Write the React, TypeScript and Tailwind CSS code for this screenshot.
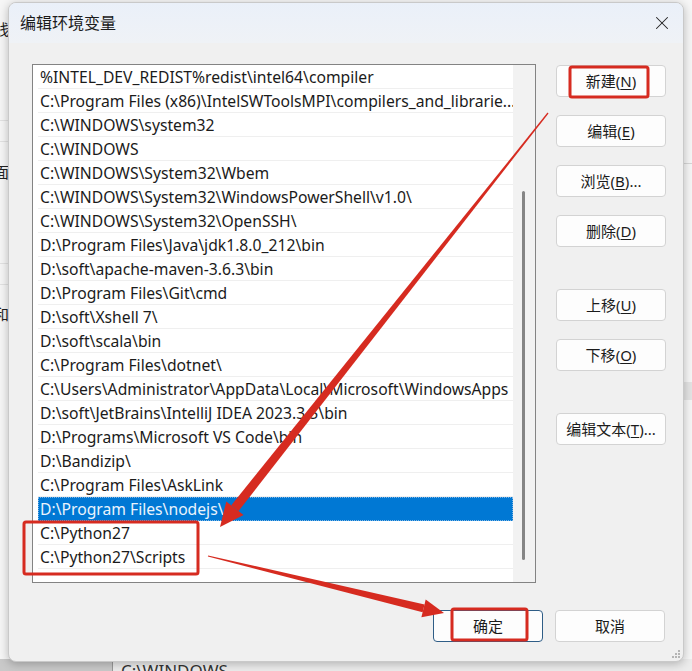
import { X } from "lucide-react";

const paths = [
  "%INTEL_DEV_REDIST%redist\\intel64\\compiler",
  "C:\\Program Files (x86)\\IntelSWToolsMPI\\compilers_and_librarie...",
  "C:\\WINDOWS\\system32",
  "C:\\WINDOWS",
  "C:\\WINDOWS\\System32\\Wbem",
  "C:\\WINDOWS\\System32\\WindowsPowerShell\\v1.0\\",
  "C:\\WINDOWS\\System32\\OpenSSH\\",
  "D:\\Program Files\\Java\\jdk1.8.0_212\\bin",
  "D:\\soft\\apache-maven-3.6.3\\bin",
  "D:\\Program Files\\Git\\cmd",
  "D:\\soft\\Xshell 7\\",
  "D:\\soft\\scala\\bin",
  "C:\\Program Files\\dotnet\\",
  "C:\\Users\\Administrator\\AppData\\Local\\Microsoft\\WindowsApps",
  "D:\\soft\\JetBrains\\IntelliJ IDEA 2023.3.5\\bin",
  "D:\\Programs\\Microsoft VS Code\\bin",
  "D:\\Bandizip\\",
  "C:\\Program Files\\AskLink",
  "D:\\Program Files\\nodejs\\",
  "C:\\Python27",
  "C:\\Python27\\Scripts",
  "",
];

const selected = 18;

function WinButton({ label, hot, tail, primary }: { label: string; hot?: string; tail?: string; primary?: boolean }) {
  return (
    <button
      className={`flex h-[32px] w-[110px] items-center justify-center rounded-[4px] border bg-[#fdfdfd] text-[15px] text-[#1b1b1b] ${
        primary ? "border-[#2f5d86]" : "border-[#d3d3d3]"
      }`}
    >
      {label}
      {hot && (
        <>
          (<span className="underline underline-offset-2">{hot}</span>)
        </>
      )}
      {tail}
    </button>
  );
}

export default function App() {
  return (
    <div
      className="relative h-[671px] w-[692px] overflow-hidden bg-[#f6f6f6]"
      style={{ fontFamily: '"Noto Sans", "Noto Sans CJK SC", sans-serif' }}
    >
      {/* window behind the dialog */}
      <div className="absolute inset-0">
        <div className="absolute left-0 top-[120px] h-px w-[10px] bg-[#e2e2e2]" />
        <div className="absolute left-0 top-[141px] h-px w-[10px] bg-[#e2e2e2]" />
        <div className="absolute left-0 top-[263px] h-px w-[10px] bg-[#e2e2e2]" />
        <div className="absolute left-0 top-[284px] h-px w-[10px] bg-[#e2e2e2]" />
        <span className="absolute left-[-6px] top-[18px] text-[15px] text-[#222]">线</span>
        <span className="absolute left-[-6px] top-[161px] text-[15px] text-[#222]">面</span>
        <span className="absolute left-[-6px] top-[303px] text-[15px] text-[#222]">和</span>
        <div className="absolute right-0 top-[163px] h-px w-[10px] bg-[#d6d6d6]" />
        <div className="absolute right-0 top-[382px] h-[18px] w-[10px] bg-[#e4e4e4]" />
        <div className="absolute bottom-0 left-0 h-[12px] w-[112px] bg-[#c9c9c9]" />
        <div className="absolute bottom-0 left-[112px] h-[12px] w-[580px] border-l border-[#9a9a9a] bg-[#ececec]">
          <span className="ml-[8px] mt-[2px] block text-[17px] leading-[20px] text-[#333]">C:\WINDOWS</span>
        </div>
      </div>

      {/* dialog */}
      <div className="absolute left-[8px] top-[2px] flex h-[660px] w-[676px] flex-col overflow-hidden rounded-[8px] border border-[#c9c9c9] bg-[#f0f0f0] shadow-[0_2px_10px_rgba(0,0,0,0.25)]">
        <div className="flex h-[40px] shrink-0 items-center justify-between bg-gradient-to-b from-[#eaf0f9] to-[#eff2f6] pl-[11px] pr-[10px]">
          <span className="text-[16px] text-[#1b1b1b]">编辑环境变量</span>
          <X className="h-[22px] w-[22px] text-[#222]" strokeWidth={1.1} />
        </div>

        <div className="flex gap-[20px] pl-[23px] pt-[21px]">
          <div className="flex h-[519px] w-[504px] border border-[#838383] bg-white">
            <div className="flex-1 overflow-hidden pl-[5px]">
              {paths.map((p, i) => (
                <div
                  key={i}
                  className={`flex h-[24px] items-center overflow-hidden whitespace-nowrap border-b pl-[2px] pt-[2px] text-[15.7px] ${
                    i === selected
                      ? "border-[#0078d4] bg-[#0078d4] text-[#e9f3fc] outline-1 outline-dotted outline-[#7fb6e6] -outline-offset-1"
                      : "border-[#efefef] text-[#1b1b1b]"
                  }`}
                >
                  {p}
                </div>
              ))}
            </div>
            <div className="w-[22px] shrink-0 bg-[#f2f2f2] pl-[9px] pt-[126px]">
              <div className="h-[369px] w-[3px] rounded-full bg-[#858585]" />
            </div>
          </div>

          <div className="flex flex-col pt-[1px]">
            <div className="flex flex-col gap-[18px]">
              <WinButton label="新建" hot="N" />
              <WinButton label="编辑" hot="E" />
              <WinButton label="浏览" hot="B" tail="..." />
              <WinButton label="删除" hot="D" />
            </div>
            <div className="mt-[42px] flex flex-col gap-[18px]">
              <WinButton label="上移" hot="U" />
              <WinButton label="下移" hot="O" />
            </div>
            <div className="mt-[42px]">
              <WinButton label="编辑文本" hot="T" tail="..." />
            </div>
          </div>
        </div>

        <div className="flex justify-end gap-[12px] pr-[18px] pt-[27px]">
          <WinButton label="确定" primary />
          <WinButton label="取消" />
        </div>

        <div className="absolute bottom-[3px] right-[3px] grid grid-cols-3 gap-[1px]">
          {[0, 0, 1, 0, 1, 1, 1, 1, 1].map((v, i) => (
            <span key={i} className={`h-[2px] w-[2px] ${v ? "bg-[#b5b5b5]" : "bg-transparent"}`} />
          ))}
        </div>
      </div>

      {/* red annotations */}
      <svg className="pointer-events-none absolute inset-0" width="692" height="671" viewBox="0 0 692 671">
        <g fill="none" stroke="#d62b20" strokeWidth="3">
          <rect x="570" y="67" width="78" height="30" rx="2" />
          <rect x="24" y="522" width="174" height="52" rx="2" />
          <rect x="452" y="609" width="75" height="31" rx="2" />
        </g>
        <g fill="#d62b20">
          <polygon points="548.5,113.4 547.5,112.6 231.3,505.3 238.5,511.1" />
          <polygon points="243.6,515.1 226.3,501.4 220,527" />
          <polygon points="207.9,556.6 208.1,555.4 424.6,604.4 422.6,612.2" />
          <polygon points="421.4,617.3 425.7,599.4 444,613" />
        </g>
      </svg>
    </div>
  );
}
